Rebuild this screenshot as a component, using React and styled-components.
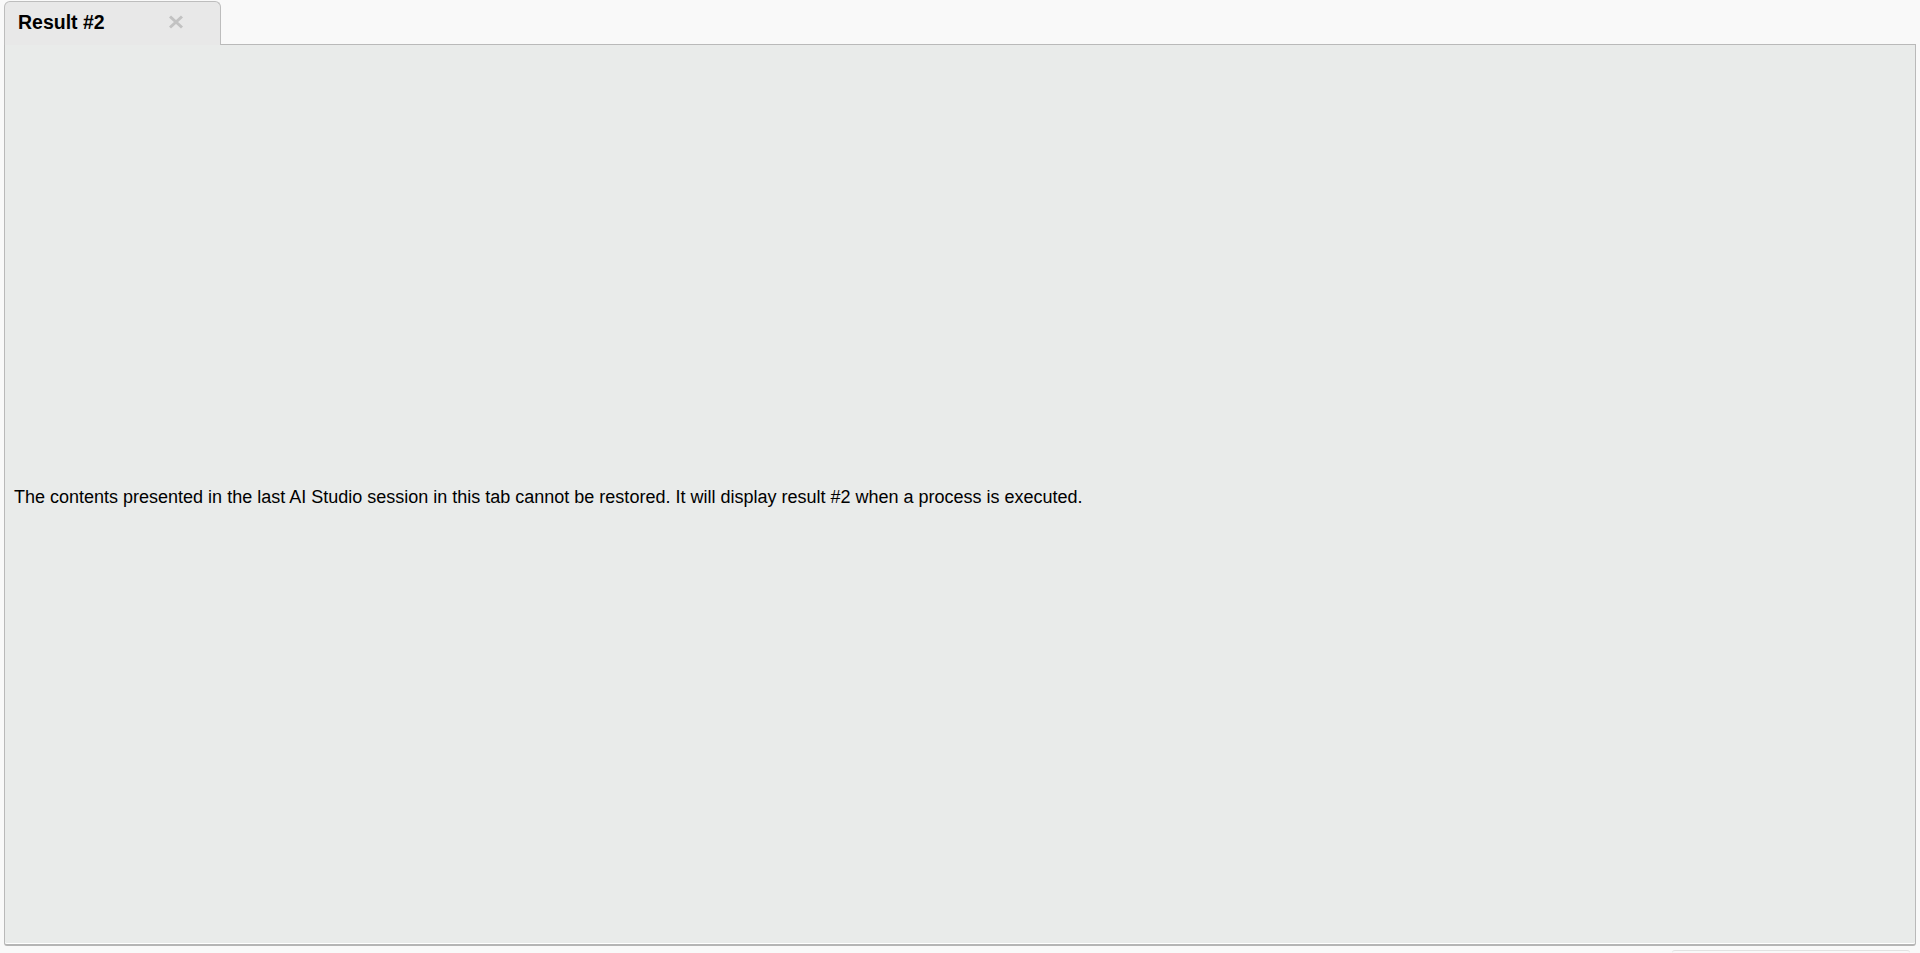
import styled, { createGlobalStyle } from "styled-components";

const GlobalStyle = createGlobalStyle`
  html, body {
    margin: 0;
    padding: 0;
    background: #f9f9f9;
    font-family: "Liberation Sans", Arial, sans-serif;
  }
`;

const Page = styled.div`
  height: 953px;
  display: flex;
  flex-direction: column;
  padding: 0 4px 0 4px;
  box-sizing: border-box;
`;

const TabBar = styled.div`
  display: flex;
  align-items: flex-end;
  height: 45px;
  margin-bottom: -1px;
  position: relative;
  z-index: 1;
`;

const Tab = styled.div`
  width: 217px;
  height: 44px;
  box-sizing: border-box;
  display: flex;
  align-items: center;
  justify-content: space-between;
  padding: 0 36px 2px 13px;
  background: #e8e8e8;
  border: 1px solid #bdbdbd;
  border-bottom: none;
  border-radius: 6px 6px 0 0;
`;

const TabTitle = styled.span`
  font-size: 19.5px;
  font-weight: bold;
  color: #000;
`;

const CloseIcon = styled.svg`
  width: 16px;
  height: 14px;
  display: block;
`;

const Panel = styled.div`
  height: 903px;
  box-sizing: border-box;
  background: #e9ebea;
  border: 1px solid #b9b9b9;
  border-bottom: 2px solid #b5b5b5;
  box-shadow: inset 0 -1px 0 #ffffff;
  border-radius: 0 0 3px 3px;
  display: flex;
  align-items: center;
  padding: 0 9px 0 9px;
`;

const Message = styled.p`
  margin: 6px 0 0 0;
  font-size: 18px;
  color: #000;
`;

const Footer = styled.div`
  display: flex;
  justify-content: flex-end;
  padding-top: 4px;
  padding-right: 6px;
`;

const FooterEdge = styled.div`
  width: 238px;
  height: 2px;
  border-top: 1px solid #e2e2e2;
  border-radius: 3px 3px 0 0;
`;

export default function App() {
  return (
    <>
      <GlobalStyle />
      <Page>
        <TabBar>
          <Tab>
            <TabTitle>Result #2</TabTitle>
            <CloseIcon viewBox="0 0 16 14">
              <path
                d="M2 1.5 L14 12.5 M14 1.5 L2 12.5"
                stroke="#c2c2c2"
                strokeWidth="3"
                strokeLinecap="butt"
              />
            </CloseIcon>
          </Tab>
        </TabBar>
        <Panel>
          <Message>
            The contents presented in the last AI Studio session in this tab
            cannot be restored. It will display result #2 when a process is
            executed.
          </Message>
        </Panel>
        <Footer>
          <FooterEdge />
        </Footer>
      </Page>
    </>
  );
}
